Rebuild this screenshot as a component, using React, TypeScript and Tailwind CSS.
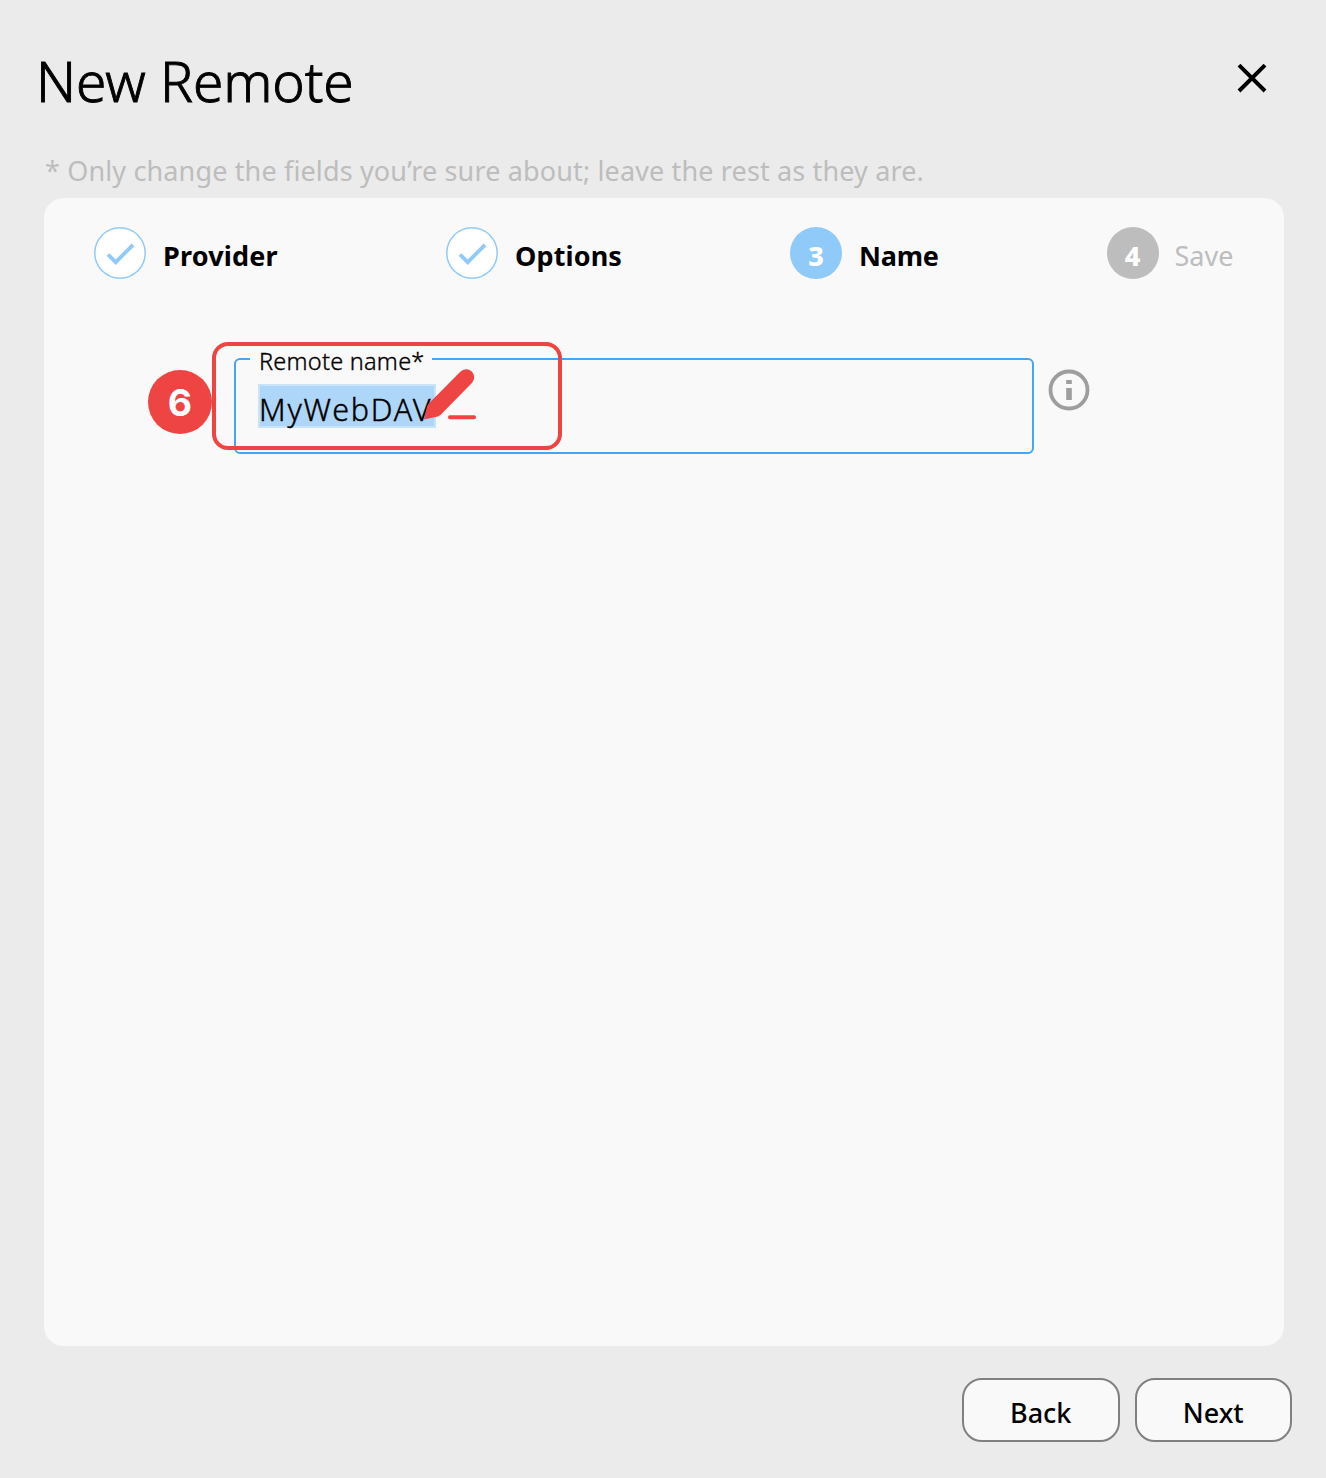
import React from "react";

function CheckCircle() {
  return (
    <svg width="52" height="52" viewBox="0 0 52 52" className="block shrink-0">
      <circle cx="26" cy="26" r="25.2" fill="#ffffff" stroke="#90caf9" strokeWidth="1.5" />
      <path d="M14 27.5 L21.7 35.2 L39 17.8" fill="none" stroke="#90caf9" strokeWidth="3.8" />
    </svg>
  );
}

function NumberCircle({ value, className }: { value: string; className: string }) {
  return (
    <div
      className={`flex size-[52px] shrink-0 items-center justify-center rounded-full pt-[5px] text-[27px] leading-none font-extrabold text-white ${className}`}
    >
      {value}
    </div>
  );
}

function StepLabel({ children, className }: { children: React.ReactNode; className: string }) {
  return <span className={`pt-1.5 text-[27px] leading-9 whitespace-nowrap ${className}`}>{children}</span>;
}

function Stepper() {
  return (
    <div className="flex h-[52px] items-center">
      <div className="flex w-[352px] items-center gap-[17px]">
        <CheckCircle />
        <StepLabel className="font-bold tracking-[0.18px]">Provider</StepLabel>
      </div>
      <div className="flex w-[344px] items-center gap-[17px]">
        <CheckCircle />
        <StepLabel className="font-bold tracking-[0.12px]">Options</StepLabel>
      </div>
      <div className="flex w-[316.5px] items-center gap-[17px]">
        <NumberCircle value="3" className="bg-[#90caf9]" />
        <StepLabel className="font-bold tracking-[-0.2px]">Name</StepLabel>
      </div>
      <div className="flex items-center gap-4">
        <NumberCircle value="4" className="bg-[#bdbdbd]" />
        <StepLabel className="text-[#bdbdbd]">Save</StepLabel>
      </div>
    </div>
  );
}

function InfoIcon() {
  return (
    <svg width="42" height="42" viewBox="0 0 42 42" className="mt-[11px] ml-3.5 block shrink-0">
      <circle cx="21" cy="21" r="18.5" fill="none" stroke="#9e9e9e" strokeWidth="3.8" />
      <path d="M18.2 11h5.6v4h-5.6zM18.2 19h5.6v12h-5.6z" fill="#9e9e9e" />
    </svg>
  );
}

function Annotation() {
  return (
    <>
      <div className="absolute top-[12px] -left-[86px] flex size-16 items-center justify-center rounded-full bg-[#ef4444] pt-px font-['Inter'] text-[37.5px] leading-none font-bold text-white">
        6
      </div>
      <div className="absolute -top-4 -left-[22px] h-[108px] w-[350px] rounded-2xl border-4 border-[#ef4444]" />
      <svg width="56" height="56" viewBox="0 0 56 56" className="absolute top-[10px] left-[188px]">
        <path
          d="M2 51.5 L4.9 39 Q5.3 36.9 6.8 35.4 L38.3 3.7 A8 8 0 0 1 49.9 15 L18.4 46.9 Q17 48.2 15 48.7 Z"
          fill="#ef4444"
        />
        <path d="M28 49.3h24" stroke="#ef4444" strokeWidth="4" strokeLinecap="round" />
      </svg>
    </>
  );
}

function NameField() {
  return (
    <div className="mt-[79px] ml-[140px] flex">
      <div className="relative h-24 w-[800px] rounded-[6px] border-2 border-[#42a5f5] px-[22px] pt-6">
        <label className="absolute -top-[15px] left-3.5 h-8 w-[182px] bg-[#f9f9f9] pl-[9px] text-[23.5px] leading-8 font-light tracking-[0.25px] whitespace-nowrap text-black [-webkit-text-stroke:0.35px_black]">
          Remote name*
        </label>
        <div className="flex h-11 w-[178px] items-center border-2 border-[#c9e3f9] bg-[#aed6f8] pt-[5px] text-[30.5px] leading-10 font-light tracking-[1.8px] whitespace-nowrap text-black [-webkit-text-stroke:0.4px_black]">
          <span className="-ml-px">MyWebDAV</span>
        </div>
        <div className="absolute top-0 left-0">
          <div className="relative -top-0.5 -left-0.5 size-0">
            <Annotation />
          </div>
        </div>
      </div>
      <InfoIcon />
    </div>
  );
}

function DialogButton({ children }: { children: React.ReactNode }) {
  return (
    <button className="flex h-16 w-[157.5px] items-center justify-center rounded-[20px] border-2 border-[#808080] bg-[#f9f9f9] pt-1.5 text-[27px] leading-9 font-medium text-black">
      {children}
    </button>
  );
}

export default function App() {
  return (
    <div className="flex h-[1478px] w-[1326px] flex-col bg-[#ebebeb] pr-[34px] pl-11 font-['Noto_Sans','Open_Sans',sans-serif]">
      <header className="-ml-2 flex items-start justify-between pt-[47px]">
        <h1 className="text-[55px] leading-[67px] font-light tracking-[-0.05px] whitespace-nowrap text-black [-webkit-text-stroke:0.9px_black]">
          New Remote
        </h1>
        <button aria-label="Close" className="mt-[17px] mr-6">
          <svg width="32" height="32" viewBox="0 0 32 32" className="block">
            <path d="M3 1.2 L29 27 M29 1.2 L3 27" stroke="#000" strokeWidth="4" fill="none" />
          </svg>
        </button>
      </header>
      <p className="mt-[39px] h-[45px] pl-px text-[27px] leading-9 tracking-[0.14px] whitespace-nowrap text-[#bdbdbd]">
        * Only change the fields you’re sure about; leave the rest as they are.
      </p>
      <main className="h-[1148px] w-[1240px] rounded-[20px] bg-[#f9f9f9] px-[50px] pt-[29px]">
        <Stepper />
        <NameField />
      </main>
      <footer className="mt-8 flex justify-end gap-[15px]">
        <DialogButton>Back</DialogButton>
        <DialogButton>Next</DialogButton>
      </footer>
    </div>
  );
}
